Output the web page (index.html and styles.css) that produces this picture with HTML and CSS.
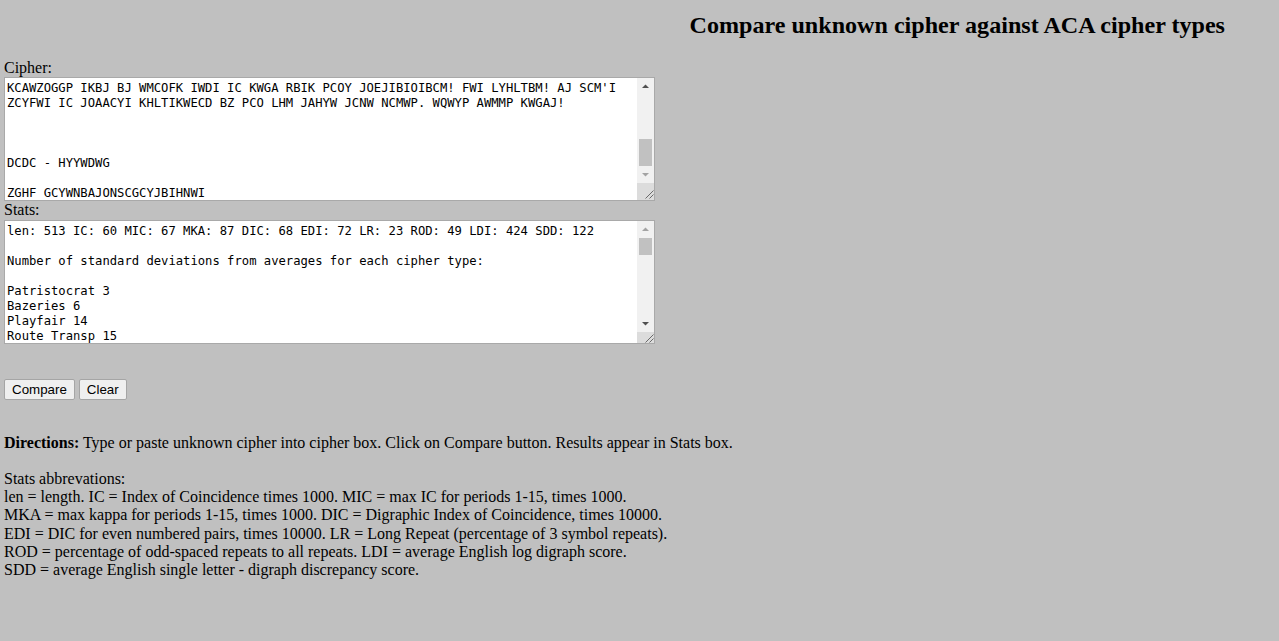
FILE: index.html
```html
<!DOCTYPE html>
<html lang="en">
<head>
<meta charset="utf-8">
<title>Compare unknown cipher against ACA cipher types</title>
<link rel="stylesheet" href="styles.css">
</head>
<body>
<header class="top">
  <div class="top-spacer"></div>
  <h2 class="title">Compare unknown cipher against ACA cipher types</h2>
</header>
<main class="page">
  <label class="field-label" for="cipher">Cipher:</label>
  <div class="box">
    <textarea id="cipher" class="box-text" spellcheck="false">KCAWZOGGP IKBJ BJ WMCOFK IWDI IC KWGA RBIK PCOY JOEJIBIOIBCM! FWI LYHLTBM! AJ SCM'I
ZCYFWI IC JOAACYI KHLTIKWECD BZ PCO LHM JAHYW JCNW NCMWP. WQWYP AWMMP KWGAJ!



DCDC - HYYWDWG

ZGHF GCYWNBAJONSCGCYJBIHNWI</textarea>
    <div class="vscroll">
      <div class="sb-btn"><svg width="17" height="17" viewBox="0 0 17 17"><polygon points="5,10 8.5,6.5 12,10" class="arrow-dark"/></svg></div>
      <div class="sb-track sb-track-end"><div class="sb-thumb thumb-cipher"></div></div>
      <div class="sb-btn"><svg width="17" height="17" viewBox="0 0 17 17"><polygon points="5,7 8.5,10.5 12,7" class="arrow-light"/></svg></div>
      <div class="sb-corner"><svg width="17" height="17" viewBox="0 0 17 17"><path d="M16.5 7.5 L8.5 15.5 M16.5 11.5 L12.5 15.5" class="grip"/></svg></div>
    </div>
  </div>
  <label class="field-label" for="stats">Stats:</label>
  <div class="box">
    <textarea id="stats" class="box-text" spellcheck="false">len: 513 IC: 60 MIC: 67 MKA: 87 DIC: 68 EDI: 72 LR: 23 ROD: 49 LDI: 424 SDD: 122

Number of standard deviations from averages for each cipher type:

Patristocrat 3
Bazeries 6
Playfair 14
Route Transp 15</textarea>
    <div class="vscroll">
      <div class="sb-btn"><svg width="17" height="17" viewBox="0 0 17 17"><polygon points="5,10 8.5,6.5 12,10" class="arrow-light"/></svg></div>
      <div class="sb-track"><div class="sb-thumb thumb-stats"></div></div>
      <div class="sb-btn"><svg width="17" height="17" viewBox="0 0 17 17"><polygon points="5,7 8.5,10.5 12,7" class="arrow-dark"/></svg></div>
      <div class="sb-corner sb-corner-short"><svg width="17" height="11" viewBox="0 0 17 11"><path d="M16.5 2.5 L8.5 10.5 M16.5 6.5 L12.5 10.5" class="grip"/></svg></div>
    </div>
  </div>
  <div class="actions">
    <button type="button" class="btn">Compare</button>
    <button type="button" class="btn">Clear</button>
  </div>
  <p class="directions"><b>Directions:</b> Type or paste unknown cipher into cipher box. Click on Compare button. Results appear in Stats box.</p>
  <p class="abbr">Stats abbrevations:<br>
len = length. IC = Index of Coincidence times 1000. MIC = max IC for periods 1-15, times 1000.<br>
MKA = max kappa for periods 1-15, times 1000. DIC = Digraphic Index of Coincidence, times 10000.<br>
EDI = DIC for even numbered pairs, times 10000. LR = Long Repeat (percentage of 3 symbol repeats).<br>
ROD = percentage of odd-spaced repeats to all repeats. LDI = average English log digraph score.<br>
SDD = average English single letter - digraph discrepancy score.</p>
</main>
</body>
</html>
```

FILE: styles.css
```css
html, body {
  margin: 0;
  padding: 0;
}

body {
  background: #c0c0c0;
  color: #000;
  font-family: "Liberation Serif", "Times New Roman", serif;
  font-size: 16px;
  padding: 0 4px;
}

.top {
  display: grid;
  grid-template-columns: 1fr 1fr;
  padding-top: 12px;
}

.title {
  margin: 0 0 20px 0;
  font-size: 24.1px;
  font-weight: bold;
  text-align: center;
}

.page {
  display: flex;
  flex-direction: column;
  align-items: flex-start;
}

.field-label {
  display: block;
  line-height: 1.149;
}

.box {
  display: flex;
  box-sizing: border-box;
  width: 651px;
  height: 124px;
  border: 1px solid #a9a9a9;
  background: #fff;
}

.box-text {
  flex: 1;
  min-width: 0;
  box-sizing: border-box;
  height: 100%;
  margin: 0;
  padding: 3px 2px 2px 2px;
  border: 0;
  outline: none;
  background: #fff;
  color: #000;
  font-family: "DejaVu Sans Mono", "Liberation Mono", monospace;
  font-size: 12.2px;
  line-height: 15px;
  overflow: hidden;
  resize: none;
  white-space: pre-wrap;
}

.vscroll {
  width: 17px;
  flex: 0 0 17px;
  display: flex;
  flex-direction: column;
  background: #f1f1f1;
}

.sb-btn {
  height: 17px;
  flex: 0 0 17px;
}

.sb-btn svg,
.sb-corner svg {
  display: block;
}

.arrow-dark {
  fill: #505050;
}

.arrow-light {
  fill: #a3a3a3;
}

.sb-track {
  flex: 1;
  display: flex;
  flex-direction: column;
  justify-content: flex-start;
  padding: 0 2px;
}

.sb-track-end {
  justify-content: flex-end;
}

.sb-thumb {
  background: #c1c1c1;
}

.thumb-cipher {
  height: 27px;
}

.thumb-stats {
  height: 17px;
}

.sb-corner {
  height: 17px;
  flex: 0 0 17px;
  background: #dcdcdc;
}

.sb-corner-short {
  height: 11px;
  flex: 0 0 11px;
}

.grip {
  stroke: #6a6a6a;
  stroke-width: 1;
  fill: none;
}

.actions {
  display: flex;
  gap: 4px;
  margin-top: 35px;
}

.btn {
  font-family: "Liberation Sans", Arial, sans-serif;
  font-size: 13.333px;
  color: #000;
  background: #efefef;
  border: 1px solid #a5a5a5;
  border-radius: 2px;
  padding: 1px 7px;
  height: 21px;
  line-height: 17px;
  margin: 0;
}

.directions {
  margin: 34px 0 0 0;
  line-height: 1.149;
}

.abbr {
  margin: 17.4px 0 0 0;
  line-height: 1.149;
}
```
